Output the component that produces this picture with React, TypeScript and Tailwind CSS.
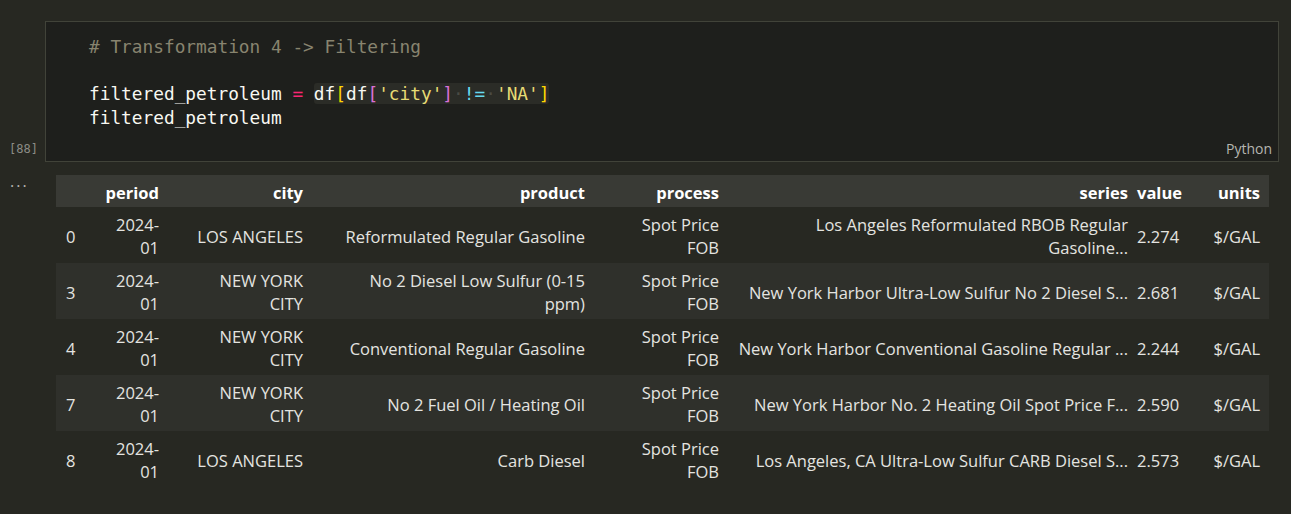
import React from 'react';

const rows = [
  { idx: '0', period: ['2024-', '01'], city: ['LOS ANGELES'], product: ['Reformulated Regular Gasoline'], series: ['Los Angeles Reformulated RBOB Regular', 'Gasoline...'], value: '2.274' },
  { idx: '3', period: ['2024-', '01'], city: ['NEW YORK', 'CITY'], product: ['No 2 Diesel Low Sulfur (0-15', 'ppm)'], series: ['New York Harbor Ultra-Low Sulfur No 2 Diesel S...'], value: '2.681' },
  { idx: '4', period: ['2024-', '01'], city: ['NEW YORK', 'CITY'], product: ['Conventional Regular Gasoline'], series: ['New York Harbor Conventional Gasoline Regular ...'], value: '2.244' },
  { idx: '7', period: ['2024-', '01'], city: ['NEW YORK', 'CITY'], product: ['No 2 Fuel Oil / Heating Oil'], series: ['New York Harbor No. 2 Heating Oil Spot Price F...'], value: '2.590' },
  { idx: '8', period: ['2024-', '01'], city: ['LOS ANGELES'], product: ['Carb Diesel'], series: ['Los Angeles, CA Ultra-Low Sulfur CARB Diesel S...'], value: '2.573' },
];

const mono = { fontFamily: '"DejaVu Sans Mono", "Liberation Mono", monospace' };

function Lines({ lines }: { lines: string[] }) {
  return (
    <>
      {lines.map((l, i) => (
        <div key={i} className="whitespace-nowrap">{l}</div>
      ))}
    </>
  );
}

function Dot() {
  return <span className="text-[#4a4b44]">·</span>;
}

export default function App() {
  return (
    <div className="min-h-[514px] w-full bg-[#272822] pt-[21px]" style={{ fontFamily: '"Open Sans", "Noto Sans", sans-serif' }}>
      {/* code cell */}
      <div className="flex">
        <div className="w-[45px] flex flex-col justify-end pb-[4px] pl-[9px]">
          <span className="text-[12px] text-[#8c8c86]" style={mono}>[88]</span>
        </div>
        <div className="w-[1234px] h-[141px] border border-[#414339] bg-[#1e1f1c] flex flex-col">
          <div className="pl-[43px] pt-[13px] text-[17.8px] leading-[23.5px] text-[#f8f8f2]" style={mono}>
            <div className="text-[#88846f]"># Transformation 4 -&gt; Filtering</div>
            <div>&nbsp;</div>
            <div className="whitespace-pre">
              filtered_petroleum <span className="text-[#f92672]">=</span>{' '}
              <span className="bg-[#2b2c27] rounded-[3px]">
                df<span className="text-[#ffd700]">[</span>df<span className="text-[#da70d6]">[</span>
                <span className="text-[#e6db74]">'city'</span>
                <span className="text-[#da70d6]">]</span><Dot /><span className="text-[#66d9ef]">!=</span><Dot />
                <span className="text-[#e6db74]">'NA'</span><span className="text-[#ffd700]">]</span>
              </span>
            </div>
            <div>filtered_petroleum</div>
          </div>
          <div className="mt-auto self-end pr-[6px] pb-[2px] text-[14px] text-[#b5b5b0]">Python</div>
        </div>
      </div>

      {/* output */}
      <div className="flex mt-[13px]">
        <div className="w-[56px] pl-[10px] text-[#b5b5b0] text-[16px] leading-[12px] tracking-[2px]">...</div>
        <table className="table-fixed border-collapse text-[16.5px] leading-[23px] text-[#e4e4e0]" style={{ width: 1213 }}>
          <colgroup>
            <col style={{ width: 40 }} />
            <col style={{ width: 72 }} />
            <col style={{ width: 144 }} />
            <col style={{ width: 282 }} />
            <col style={{ width: 134 }} />
            <col style={{ width: 409 }} />
            <col style={{ width: 49 }} />
            <col style={{ width: 83 }} />
          </colgroup>
          <thead>
            <tr className="h-[32px] bg-[#393a35] text-white font-bold [&>th]:pt-[3px]">
              <th></th>
              <th className="text-right pr-[9px]">period</th>
              <th className="text-right pr-[9px]">city</th>
              <th className="text-right pr-[9px]">product</th>
              <th className="text-right pr-[9px]">process</th>
              <th className="text-right pr-[9px]">series</th>
              <th className="text-right pr-[9px]">value</th>
              <th className="text-right pr-[9px]">units</th>
            </tr>
          </thead>
          <tbody>
            {rows.map((r, i) => (
              <tr key={r.idx} className={i % 2 === 1 ? 'h-[56px] bg-[#2f302b] [&>td]:pt-[2px]' : 'h-[56px] [&>td]:pt-[2px]'}>
                <td className="pl-[10px] text-left">{r.idx}</td>
                <td className="text-right pr-[9px]"><Lines lines={r.period} /></td>
                <td className="text-right pr-[9px]"><Lines lines={r.city} /></td>
                <td className="text-right pr-[9px]"><Lines lines={r.product} /></td>
                <td className="text-right pr-[9px]"><Lines lines={['Spot Price', 'FOB']} /></td>
                <td className="text-right pr-[9px]"><Lines lines={r.series} /></td>
                <td className="text-right pr-[9px]">{r.value}</td>
                <td className="text-right pr-[9px] whitespace-nowrap">$/GAL</td>
              </tr>
            ))}
          </tbody>
        </table>
      </div>
    </div>
  );
}
